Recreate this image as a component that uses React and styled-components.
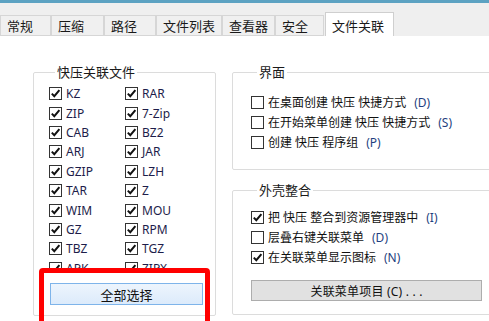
import React from "react";
import styled, { createGlobalStyle } from "styled-components";

const GlobalStyle = createGlobalStyle`
   html, body {
      margin: 0;
      padding: 0;
      background: #ffffff;
   }
   * {
      box-sizing: border-box;
   }
`;

const Page = styled.div`
   position: relative;
   width: 489px;
   height: 321px;
   overflow: hidden;
   background: #ffffff;
   font-family: "Noto Sans", "Noto Sans CJK SC", sans-serif;
   color: #111;
`;

const TabBar = styled.div`
   height: 36px;
   border-top: 3px solid #5ca2c2;
   background: #efefef;
   display: flex;
   align-items: flex-end;
`;

const Tab = styled.div`
   width: ${({ w }) => w}px;
   height: ${({ active }) => (active ? 24 : 21)}px;
   margin-right: ${({ gap }) => gap || 0}px;
   padding-left: 6px;
   display: flex;
   align-items: ${({ active }) => (active ? "flex-start" : "center")};
   padding-top: ${({ active }) => (active ? 3 : 0)}px;
   font-size: 13px;
   color: #1a1a1a;
   background: ${({ active }) => (active ? "#ffffff" : "#f0f0f0")};
   border: 1px solid ${({ active }) => (active ? "#cfcfcf" : "#d6d6d6")};
   border-bottom: ${({ active }) => (active ? "none" : "1px solid #d6d6d6")};
   white-space: nowrap;
`;

const Content = styled.div`
   display: grid;
   grid-template-columns: 183px 290px;
   column-gap: 16px;
   padding: 29px 0 0 33px;
`;

const Column = styled.div`
   display: flex;
   flex-direction: column;
   gap: ${({ gap }) => gap || 0}px;
`;

const Group = styled.fieldset`
   margin: 0;
   height: ${({ h }) => h}px;
   padding: ${({ pad }) => pad};
   border: 1px solid #dcdcdc;
   border-radius: 2px;
   min-width: 0;
`;

const Legend = styled.legend`
   padding: 0 2px;
   margin-left: 6px;
   font-size: 13px;
   line-height: 15px;
   color: #1a1a1a;
`;

const FileGrid = styled.div`
   display: grid;
   grid-template-columns: 76px 76px;
   grid-auto-rows: 19.4px;
   height: 187px;
   overflow: hidden;
`;

const Row = styled.label`
   display: flex;
   align-items: center;
   gap: 4px;
   height: ${({ h }) => h || 19.5}px;
   font-size: 12px;
   color: ${({ ext }) => (ext ? "#1d1d4a" : "#111")};
   white-space: nowrap;
`;

const Box = styled.span`
   width: 13px;
   height: 13px;
   flex: none;
   border: 1px solid #333;
   background: #fff;
   display: flex;
   align-items: center;
   justify-content: center;
`;

const Key = styled.span`
   color: #1f3f80;
   margin-left: 4px;
`;

const SelectAll = styled.button`
   margin: 12px 0 0 1px;
   width: 153px;
   height: 22px;
   border: 1px solid #7eb4ea;
   background: linear-gradient(#edf5fd, #dcebfb);
   font-family: inherit;
   font-size: 13px;
   color: #111;
   padding: 0;
`;

const MenuButton = styled.button`
   margin: 13px 0 0 0;
   width: 231px;
   height: 21px;
   border: 1px solid #adadad;
   background: #e1e1e1;
   font-family: inherit;
   font-size: 12px;
   color: #111;
   padding: 0;
   letter-spacing: 0.2px;
`;

const Highlight = styled.div`
   position: absolute;
   left: 39px;
   top: 268px;
   width: 171px;
   height: 70px;
   border: 5px solid #ff0000;
   border-radius: 4px;
   pointer-events: none;
`;

const Check = ({ on }) => (
   <Box>
      {on && (
         <svg width="11" height="11" viewBox="0 0 11 11">
            <path
               d="M1.8 5.6 L4.3 8.2 L9.4 2.2"
               fill="none"
               stroke="#111"
               strokeWidth="2"
            />
         </svg>
      )}
   </Box>
);

const tabs = [
   { label: "常规", w: 51 },
   { label: "压缩", w: 53 },
   { label: "路径", w: 52 },
   { label: "文件列表", w: 66 },
   { label: "查看器", w: 53 },
   { label: "安全", w: 49, gap: 1 },
   { label: "文件关联", w: 69, active: true },
];

const fileTypes = [
   "KZ", "RAR", "ZIP", "7-Zip", "CAB", "BZ2", "ARJ", "JAR", "GZIP", "LZH",
   "TAR", "Z", "WIM", "MOU", "GZ", "RPM", "TBZ", "TGZ", "APK", "ZIPX",
];

const uiOptions = [
   { text: "在桌面创建 快压 快捷方式", key: "(D)", on: false },
   { text: "在开始菜单创建 快压 快捷方式", key: "(S)", on: false },
   { text: "创建 快压 程序组", key: "(P)", on: false },
];

const shellOptions = [
   { text: "把 快压 整合到资源管理器中", key: "(I)", on: true },
   { text: "层叠右键关联菜单", key: "(D)", on: false },
   { text: "在关联菜单显示图标", key: "(N)", on: true },
];

const App = () => {
   return (
      <Page>
         <GlobalStyle />
         <TabBar>
            {tabs.map((t) => (
               <Tab key={t.label} w={t.w} gap={t.gap} active={t.active}>
                  {t.label}
               </Tab>
            ))}
         </TabBar>
         <Content>
            <Group h={251} pad="4px 10px 0 15px">
               <Legend>快压关联文件</Legend>
               <FileGrid>
                  {fileTypes.map((f) => (
                     <Row key={f} ext>
                        <Check on />
                        {f}
                     </Row>
                  ))}
               </FileGrid>
               <SelectAll>全部选择</SelectAll>
            </Group>
            <Column gap={13}>
               <Group h={105} pad="12px 0 0 18px">
                  <Legend>界面</Legend>
                  {uiOptions.map((o) => (
                     <Row key={o.text} h={20}>
                        <Check on={o.on} />
                        {o.text}
                        <Key>{o.key}</Key>
                     </Row>
                  ))}
               </Group>
               <Group h={132} pad="9px 0 0 18px">
                  <Legend>外壳整合</Legend>
                  {shellOptions.map((o) => (
                     <Row key={o.text} h={20}>
                        <Check on={o.on} />
                        {o.text}
                        <Key>{o.key}</Key>
                     </Row>
                  ))}
                  <MenuButton>关联菜单项目 (C) . . .</MenuButton>
               </Group>
            </Column>
         </Content>
         <Highlight />
      </Page>
   );
};

export default App;
